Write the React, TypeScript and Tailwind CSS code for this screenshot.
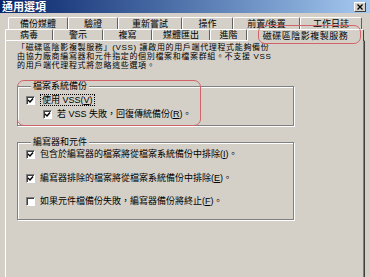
import React from 'react';

const backRow = [
  { label: '備份媒體', w: 60 },
  { label: '驗證', w: 50 },
  { label: '重新嘗試', w: 64 },
  { label: '操作', w: 51 },
  { label: '前置/後置', w: 67 },
  { label: '工作日誌', w: 62 },
];

const frontRow = [
  { label: '病毒', w: 48 },
  { label: '警示', w: 50 },
  { label: '複寫', w: 49 },
  { label: '媒體匯出', w: 58 },
  { label: '進階', w: 37 },
];

function CheckBox({ checked }: { checked: boolean }) {
  return (
    <div className="w-[9px] h-[9px] shrink-0 border-t border-l border-[#808080] border-r border-b border-r-white border-b-white bg-white shadow-[inset_1px_1px_0_#404040] flex items-center justify-center">
      {checked && (
        <svg width="7" height="7" viewBox="0 0 7 7">
          <path d="M1 3 L3 5 L6 1.5" stroke="#000" strokeWidth="1.4" fill="none" />
        </svg>
      )}
    </div>
  );
}

function Option({
  checked,
  text,
  hotkey,
  tail,
  focus,
}: {
  checked: boolean;
  text: string;
  hotkey: string;
  tail?: string;
  focus?: boolean;
}) {
  return (
    <div className="flex items-center h-[12px] gap-[5px]">
      <CheckBox checked={checked} />
      <span className={focus ? 'border border-dotted border-black px-[1px] leading-[10px]' : 'leading-[10px]'}>
        {text}(<span className="underline">{hotkey}</span>){tail}
      </span>
    </div>
  );
}

export default function App() {
  return (
    <div className="w-[370px] h-[277px] overflow-hidden relative bg-[#d4d0c8] text-black text-[9px] font-['Liberation_Sans','Noto_Sans_CJK_TC',sans-serif]">
      {/* title bar */}
      <div className="h-[13px] flex items-center justify-between px-[2px] bg-gradient-to-r from-[#0a246a] to-[#a6caf0]">
        <span className="text-white font-bold text-[11px] leading-[12px]">通用選項</span>
        <div className="w-[12px] h-[10px] mr-[2px] bg-[#d4d0c8] border border-t-white border-l-white border-r-[#404040] border-b-[#404040] flex items-center justify-center">
          <svg width="6" height="6" viewBox="0 0 6 6">
            <path d="M0.5 0.5 L5.5 5.5 M5.5 0.5 L0.5 5.5" stroke="#000" strokeWidth="1.3" />
          </svg>
        </div>
      </div>

      {/* tabs */}
      <div className="pt-[4px]">
        <div className="flex ml-[8px] h-[12px]">
          {backRow.map((t) => (
            <div
              key={t.label}
              style={{ width: t.w }}
              className="h-[12px] flex items-center justify-center border-t border-l border-white border-r border-r-[#606060] rounded-t-[2px] leading-[10px]"
            >
              {t.label}
            </div>
          ))}
        </div>
        <div className="flex items-end ml-[5px] h-[11px] relative z-10">
          {frontRow.map((t) => (
            <div
              key={t.label}
              style={{ width: t.w }}
              className="h-[11px] flex items-center justify-center bg-[#d4d0c8] border-t border-l border-white border-r border-r-[#606060] rounded-t-[2px] leading-[10px]"
            >
              {t.label}
            </div>
          ))}
          <div className="w-[117px] h-[12px] -mb-[1px] flex items-center justify-center bg-[#d4d0c8] border-t border-l border-white border-r border-r-[#404040] rounded-t-[2px] leading-[10px] tracking-[0.5px]">
            磁碟區陰影複製服務
          </div>
        </div>
      </div>

      {/* panel */}
      <div className="ml-[5px] w-[360px] h-[240px] border-t border-l border-white border-r border-r-[#404040] shadow-[inset_-1px_0_0_#808080] pl-[11px] pt-[2px]">
        <p className="text-[8px] tracking-[0.65px] leading-[9px]">
          「磁碟區陰影複製服務」(VSS) 讓啟用的用戶端代理程式能夠備份
          <br />
          由協力廠商編寫器和元件指定的個別檔案和檔案群組。不支援 VSS
          <br />
          的用戶端代理程式將忽略這些選項。
        </p>

        <fieldset className="mt-[11px] w-[277px] border border-[#808080] shadow-[inset_1px_1px_0_#fff,1px_1px_0_#fff] pl-[8px] pb-[5px]">
          <legend className="ml-[5px] px-[2px] leading-[10px] bg-[#d4d0c8]">檔案系統備份</legend>
          <div className="mt-[3px]">
            <Option checked text="使用 VSS" hotkey="V" focus />
          </div>
          <div className="mt-[2px] pl-[17px]">
            <Option checked text="若 VSS 失敗，回復傳統備份" hotkey="R" tail="。" />
          </div>
        </fieldset>

        <fieldset className="mt-[11px] w-[277px] border border-[#808080] shadow-[inset_1px_1px_0_#fff,1px_1px_0_#fff] pl-[8px] pb-[12px]">
          <legend className="ml-[5px] px-[2px] leading-[10px] bg-[#d4d0c8]">編寫器和元件</legend>
          <div className="mt-[1px]">
            <Option checked text="包含於編寫器的檔案將從檔案系統備份中排除" hotkey="I" tail="。" />
          </div>
          <div className="mt-[12px]">
            <Option checked text="編寫器排除的檔案將從檔案系統備份中排除" hotkey="E" tail="。" />
          </div>
          <div className="mt-[11px]">
            <Option checked={false} text="如果元件檔備份失敗，編寫器備份將終止" hotkey="F" tail="。" />
          </div>
        </fieldset>
      </div>

      {/* red annotation outlines */}
      <div className="absolute left-[258px] top-[25px] w-[103px] h-[19px] rounded-[7px] border-[1.5px] border-[#d0646a] z-20" />
      <div className="absolute left-[17px] top-[80px] w-[184px] h-[46px] rounded-[7px] border-[1.5px] border-[#d0646a] z-20" />
    </div>
  );
}
